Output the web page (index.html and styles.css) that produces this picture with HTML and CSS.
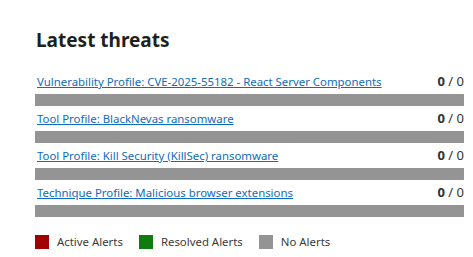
FILE: index.html
```html
<!DOCTYPE html>
<html lang="en">
<head>
  <meta charset="UTF-8" />
  <title>Latest threats</title>
  <link rel="stylesheet" href="styles.css">
</head>
<body>
  <div class="panel">
    <h2>Latest threats</h2>

    <div class="threats">
      <div class="threat">
        <div class="threat-head">
          <a href="#">Vulnerability Profile: CVE-2025-55182 - React Server Components</a>
          <span class="count"><b>0</b> / 0</span>
        </div>
        <div class="bar"></div>
      </div>
      <div class="threat">
        <div class="threat-head">
          <a href="#">Tool Profile: BlackNevas ransomware</a>
          <span class="count"><b>0</b> / 0</span>
        </div>
        <div class="bar"></div>
      </div>
      <div class="threat">
        <div class="threat-head">
          <a href="#">Tool Profile: Kill Security (KillSec) ransomware</a>
          <span class="count"><b>0</b> / 0</span>
        </div>
        <div class="bar"></div>
      </div>
      <div class="threat">
        <div class="threat-head">
          <a href="#">Technique Profile: Malicious browser extensions</a>
          <span class="count"><b>0</b> / 0</span>
        </div>
        <div class="bar"></div>
      </div>
    </div>

    <div class="legend">
      <span class="key"><i class="swatch active"></i>Active Alerts</span>
      <span class="key"><i class="swatch resolved"></i>Resolved Alerts</span>
      <span class="key"><i class="swatch none"></i>No Alerts</span>
    </div>
  </div>
</body>
</html>
```

FILE: styles.css
```css
body {
  margin: 0;
  background: #fff;
  font-family: 'Noto Sans', 'Open Sans', sans-serif;
  color: #323130;
}
.panel {
  padding: 26px 9px 0 35px;
}
h2 {
  margin: 0 0 18px 1px;
  font-size: 19px;
  font-weight: 700;
  line-height: 28px;
  color: #201f1e;
}
.threat {
  margin-bottom: 3px;
}
.threat-head {
  display: flex;
  justify-content: space-between;
  align-items: baseline;
  height: 22px;
  padding-left: 2px;
}
.threat-head a {
  font-size: 11.4px;
  line-height: 18px;
  color: #0f6cbd;
  text-decoration: underline;
}
.count {
  font-size: 13px;
  line-height: 18px;
  color: #323130;
}
.count b {
  font-weight: 700;
}
.bar {
  height: 12px;
  background: #949494;
}
.legend {
  display: flex;
  gap: 16px;
  margin-top: 17px;
  font-size: 11.4px;
}
.key {
  display: flex;
  align-items: center;
  color: #3b3a39;
}
.swatch {
  width: 14px;
  height: 14px;
  margin-right: 8px;
}
.swatch.active {
  background: #a00000;
}
.swatch.resolved {
  background: #107c10;
}
.swatch.none {
  background: #949494;
}
```
